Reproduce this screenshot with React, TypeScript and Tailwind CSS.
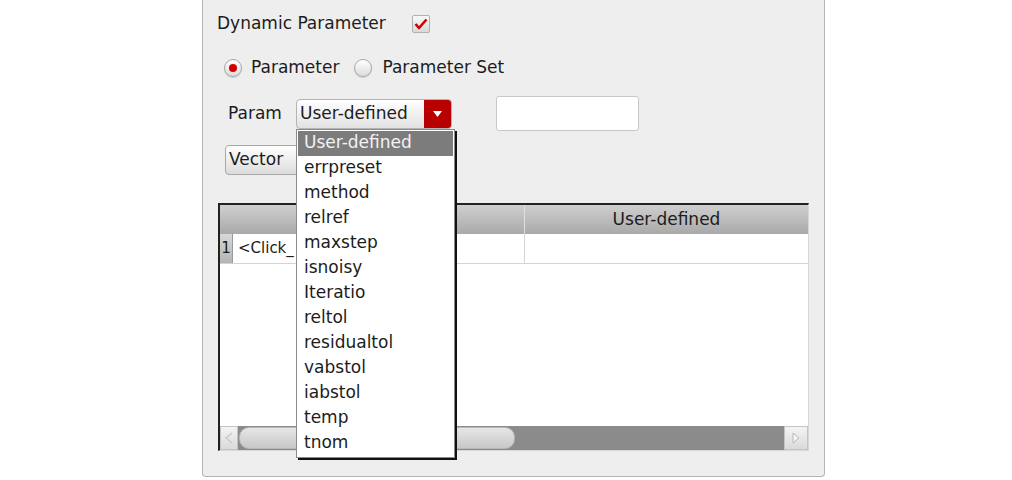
import React from 'react';

const font = { fontFamily: '"DejaVu Sans", "Liberation Sans", sans-serif' };

const items = [
  'User-defined',
  'errpreset',
  'method',
  'relref',
  'maxstep',
  'isnoisy',
  'Iteratio',
  'reltol',
  'residualtol',
  'vabstol',
  'iabstol',
  'temp',
  'tnom',
];

const Radio: React.FC<{ checked?: boolean }> = ({ checked }) => (
  <span className="flex h-[18px] w-[18px] items-center justify-center rounded-full border border-[#a8a8a8] bg-gradient-to-b from-[#ffffff] to-[#dcdcdc] shadow-[0_1px_1px_rgba(0,0,0,0.15)]">
    {checked && <span className="h-[8px] w-[8px] rounded-full bg-[#d40000]" />}
  </span>
);

const Arrow: React.FC<{ dir: 'left' | 'right' }> = ({ dir }) => (
  <svg width="8" height="12" viewBox="0 0 8 12">
    {dir === 'left' ? (
      <path d="M7 1 L1 6 L7 11" fill="none" stroke="#c8c8c8" strokeWidth="1.2" />
    ) : (
      <path d="M1 1 L7 6 L1 11 Z" fill="#f4f4f4" stroke="#b8b8b8" strokeWidth="1" />
    )}
  </svg>
);

export default function App() {
  return (
    <div className="h-[480px] w-[1012px] bg-white text-[17px] text-[#1c1c1c]" style={font}>
      <div className="ml-[202px] flex h-[477px] w-[623px] flex-col rounded-b-[4px] border-x border-b border-[#b4b4b4] bg-[#eeeeee] pt-[2px]">
        {/* dynamic parameter */}
        <div className="flex h-[44px] items-center pl-[14px]">
          <span>Dynamic Parameter</span>
          <span className="ml-[26px] flex h-[18px] w-[18px] items-center justify-center rounded-[2px] border border-[#b0b0b0] bg-gradient-to-b from-[#fafafa] to-[#d8d8d8]">
            <svg width="14" height="12" viewBox="0 0 14 12">
              <path d="M1.5 6 L5 10 L12.5 1.5" fill="none" stroke="#d00000" strokeWidth="2.6" strokeLinejoin="round" />
            </svg>
          </span>
        </div>

        {/* radios */}
        <div className="flex h-[44px] items-center pl-[21px]">
          <Radio checked />
          <span className="ml-[9px]">Parameter</span>
          <span className="ml-[15px]">
            <Radio />
          </span>
          <span className="ml-[10px]">Parameter Set</span>
        </div>

        {/* param row */}
        <div className="mt-[6px] flex h-[35px] items-center pl-[25px]">
          <span className="w-[68px]">Param</span>
          <div className="relative">
            <div className="flex h-[30px] w-[156px] items-stretch overflow-hidden rounded-[4px] border border-[#b4b4b4] bg-gradient-to-b from-[#ffffff] to-[#e2e2e2]">
              <span className="flex flex-1 items-center pl-[3px] leading-none">User-defined</span>
              <span className="flex w-[27px] items-center justify-center bg-[#b80000]">
                <svg width="9" height="6" viewBox="0 0 9 6">
                  <path d="M0 0 H9 L4.5 6 Z" fill="#ffffff" />
                </svg>
              </span>
            </div>
            <div className="absolute left-0 top-full z-10 w-[159px] border border-[#8a8a8a] bg-white p-[1px] shadow-[2px_2px_0_#111111]">
              {items.map((it, i) => (
                <div
                  key={it}
                  className={
                    i === 0
                      ? 'flex h-[25px] items-center bg-[#7c7c7c] pl-[6px] text-[#f2f2f2]'
                      : 'flex h-[25px] items-center pl-[6px]'
                  }
                >
                  {it}
                </div>
              ))}
            </div>
          </div>
          <div className="ml-[44px] h-[35px] w-[143px] rounded-[3px] border border-[#c8c8c8] bg-white" />
        </div>

        {/* vector button */}
        <div className="mt-[14px] pl-[22px]">
          <div className="flex h-[30px] w-[78px] items-center rounded-[4px] border border-[#a8a8a8] bg-gradient-to-b from-[#ffffff] to-[#dcdcdc] pl-[3px]">
            Vector
          </div>
        </div>

        {/* table */}
        <div className="ml-[15px] mt-[28px] flex h-[248px] w-[591px] flex-col border-l-2 border-t-2 border-r border-b border-l-[#222222] border-t-[#222222] border-r-[#d8d8d8] border-b-[#d8d8d8] bg-white">
          <div className="flex h-[29px] bg-gradient-to-b from-[#cfcfcf] to-[#a9a9a9]">
            <div className="w-[305px] border-r border-[#e0e0e0]" />
            <div className="flex flex-1 items-center justify-center">User-defined</div>
          </div>
          <div className="flex h-[30px] border-b border-[#d4d4d4]">
            <div className="flex w-[13px] items-center justify-center border-r border-[#9a9a9a] bg-gradient-to-b from-[#d8d8d8] to-[#b4b4b4] text-[15px]">
              1
            </div>
            <div className="flex w-[292px] items-center border-r border-[#d4d4d4] pl-[5px] text-[15px]">&lt;Click_</div>
            <div className="flex-1" />
          </div>
          <div className="flex-1" />
          <div className="flex h-[24px] bg-[#8b8b8b]">
            <div className="flex w-[18px] items-center justify-center border border-[#c4c4c4] bg-gradient-to-b from-[#f4f4f4] to-[#dadada]">
              <Arrow dir="left" />
            </div>
            <div className="my-[1px] ml-[1px] w-[276px] rounded-[10px] border border-[#b8b8b8] bg-gradient-to-b from-[#e6e6e6] to-[#c8c8c8]" />
            <div className="flex-1" />
            <div className="flex w-[24px] items-center justify-center border border-[#c4c4c4] bg-gradient-to-b from-[#f4f4f4] to-[#dadada]">
              <Arrow dir="right" />
            </div>
          </div>
        </div>
      </div>
    </div>
  );
}
